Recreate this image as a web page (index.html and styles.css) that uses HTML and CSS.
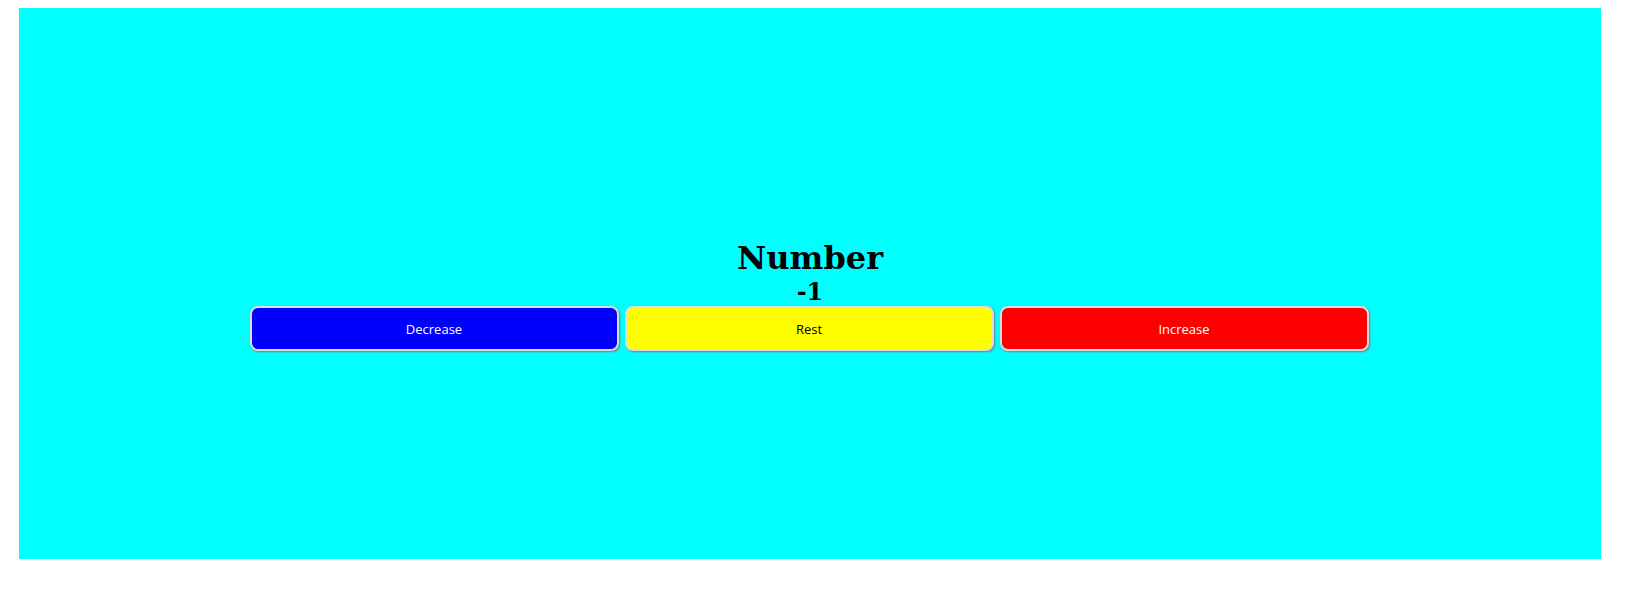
FILE: index.html
```html
<!DOCTYPE html>
<html>
<head>
<meta charset="utf-8">
<link rel="stylesheet" href="styles.css">
</head>
<body>
<div class="panel">
  <h1 class="title">Number</h1>
  <h2 class="value">-1</h2>
  <div class="buttons">
    <button class="btn btn-dec">Decrease</button>
    <button class="btn btn-rest">Rest</button>
    <button class="btn btn-inc">Increase</button>
  </div>
</div>
</body>
</html>
```
FILE: styles.css
```css
body {
  margin: 8px;
  background: #fff;
}
.panel {
  margin-left: 11px;
  width: 1582px;
  height: 551px;
  box-sizing: border-box;
  background: #00ffff;
  padding-top: 231px;
  display: flex;
  flex-direction: column;
  align-items: center;
  font-family: "DejaVu Serif", serif;
}
.title {
  margin: 0;
  font-size: 32px;
  font-weight: bold;
  line-height: 38px;
}
.value {
  margin: 0;
  font-size: 24px;
  font-weight: bold;
  line-height: 29px;
}
.buttons {
  display: flex;
  gap: 6px;
  margin-left: -2px;
}
.btn {
  width: 369px;
  height: 45px;
  border: 2px solid #dcdcdc;
  border-radius: 8px;
  box-shadow: 1px 1px 2px #7a7a7a;
  font-family: "Open Sans", sans-serif;
  font-size: 13px;
  padding: 0;
}
.btn-dec { background: #0000ff; color: #fff; }
.btn-rest { background: #ffff00; color: #000; }
.btn-inc { background: #ff0000; color: #fff; }
```
